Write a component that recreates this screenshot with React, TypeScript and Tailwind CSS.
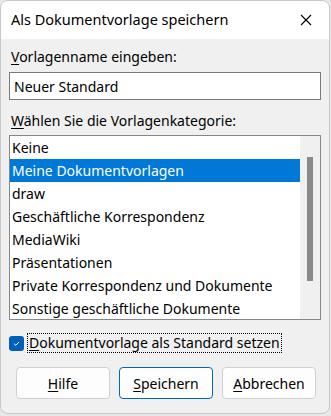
import React from 'react';

const items = [
  'Keine',
  'Meine Dokumentvorlagen',
  'draw',
  'Geschäftliche Korrespondenz',
  'MediaWiki',
  'Präsentationen',
  'Private Korrespondenz und Dokumente',
  'Sonstige geschäftliche Dokumente',
];

const Key: React.FC<{ children: React.ReactNode }> = ({ children }) => (
  <span className="underline underline-offset-2 decoration-1">{children}</span>
);

const App: React.FC = () => {
  return (
    <div
      className="w-[331px] h-[416px] bg-[#e8e8e8] overflow-hidden"
      style={{ fontFamily: '"Noto Sans", "Open Sans", sans-serif' }}
    >
      <div className="w-[330px] h-[414px] bg-[#f0f0f0] border border-[#c8c8c8] rounded-lg overflow-hidden flex flex-col text-[14px] text-black">
        {/* Title bar */}
        <div className="h-[38px] bg-white flex items-center justify-between pl-[10px] pr-[16px]">
          <span className="text-[14.5px]">Als Dokumentvorlage speichern</span>
          <svg width="12" height="12" viewBox="0 0 12 12" className="mr-[1px]">
            <path d="M1 1 L11 11 M11 1 L1 11" stroke="#000" strokeWidth="1.1" />
          </svg>
        </div>

        {/* Content */}
        <div className="flex flex-col px-[8px] pt-[7px]">
          <label className="pl-[2px] leading-[22px]">
            <Key>V</Key>orlagenname eingeben:
          </label>
          <div className="mt-[4px] h-[28px] bg-white border border-[#7a7a7a] flex items-center pl-[4px]">
            Neuer Standard
          </div>

          <label className="mt-[10px] pl-[2px] leading-[22px]">
            <Key>W</Key>ählen Sie die Vorlagenkategorie:
          </label>
          <div className="mt-[3px] h-[185px] bg-white border border-[#828790] flex">
            <div className="flex-1 flex flex-col">
              {items.map((item, i) => (
                <div
                  key={item}
                  className={`h-[23px] leading-[23px] pl-[2px] whitespace-nowrap ${
                    i === 1 ? 'bg-[#0078d7] text-white' : ''
                  }`}
                >
                  {item}
                </div>
              ))}
            </div>
            <div className="w-[20px] bg-[#f0f0f0] flex justify-center pt-[21px]">
              <div className="w-[6px] h-[124px] bg-[#8a8a8a]" />
            </div>
          </div>

          {/* Checkbox */}
          <div className="mt-[13px] flex items-center">
            <div className="w-[15px] h-[15px] rounded-[3px] bg-[#005fb8] flex items-center justify-center">
              <svg width="9" height="9" viewBox="0 0 9 9">
                <path d="M2 4.6 L3.8 6.3 L7 3" stroke="#fff" strokeWidth="1" fill="none" />
              </svg>
            </div>
            <div className="ml-[3px] border border-dotted border-black px-[1px] leading-[18px]">
              <Key>D</Key>okumentvorlage als Standard setzen
            </div>
          </div>

          {/* Buttons */}
          <div className="mt-[14px] flex gap-[9px] pl-[7px]">
            <button className="w-[94px] h-[32px] bg-[#fdfdfd] border border-[#d0d0d0] rounded-[4px]">
              <Key>H</Key>ilfe
            </button>
            <button className="w-[94px] h-[32px] bg-[#fdfdfd] border border-[#0067c0] rounded-[4px]">
              <Key>S</Key>peichern
            </button>
            <button className="w-[94px] h-[32px] bg-[#fdfdfd] border border-[#d0d0d0] rounded-[4px]">
              <Key>A</Key>bbrechen
            </button>
          </div>
        </div>
      </div>
    </div>
  );
};

export default App;
